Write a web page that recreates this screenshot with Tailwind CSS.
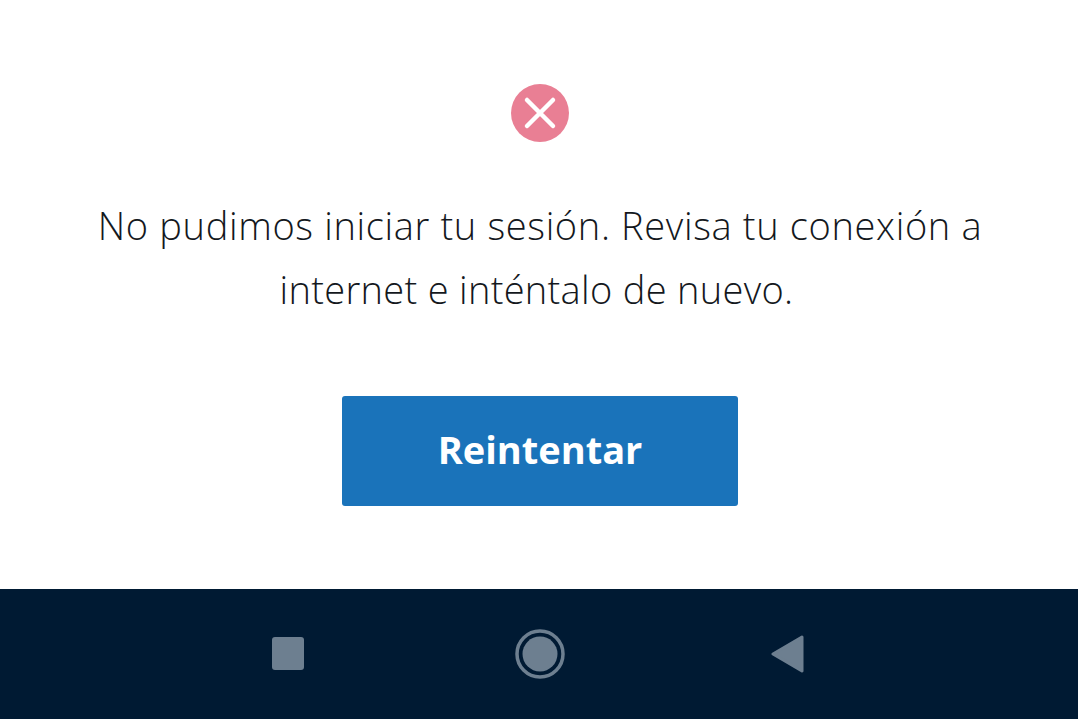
<!DOCTYPE html>
<html lang="en">
  <head>
    <meta charset="UTF-8" />
    <title>Reintentar</title>
    <script src="https://cdn.jsdelivr.net/npm/@tailwindcss/browser@4"></script>
  </head>
  <body class="bg-white font-['Open_Sans','Lato',sans-serif]">
    <div class="flex h-[719px] w-[1078px] flex-col overflow-hidden">
      <main class="flex h-[589px] flex-col items-center pt-[84px] pl-[2px]">
        <svg class="h-[58px] w-[58px]" viewBox="0 0 58 58">
          <circle cx="29" cy="29" r="29" fill="#e97f94" />
          <path d="M16 16 L42 42 M42 16 L16 42" stroke="#fff" stroke-width="4.5" stroke-linecap="round" />
        </svg>
        <p class="mt-[51px] w-[940px] text-center text-[38px] leading-[64px] font-light text-[#14181d]">
          <span class="block tracking-[0.65px]">No pudimos iniciar tu sesión. Revisa tu conexión a</span>
          <span class="block pr-[7px] tracking-[0.31px]">internet e inténtalo de nuevo.</span>
        </p>
        <button class="mt-[75px] flex h-[110px] w-[396px] items-center justify-center rounded-[3px] bg-[#1a73ba] pb-[3px] text-[38px] font-bold text-white">
          Reintentar
        </button>
      </main>
      <nav class="flex h-[130px] items-center justify-between bg-[#001a33] pr-[274px] pb-[1px] pl-[272px]">
        <div class="h-[33px] w-[32px] rounded-[3px] bg-[#6d7f90]"></div>
        <svg class="ml-[4px] h-[50px] w-[50px]" viewBox="0 0 50 50">
          <circle cx="25" cy="25" r="23" fill="none" stroke="#6d7f90" stroke-width="3.5" />
          <circle cx="25" cy="25" r="17.5" fill="#6d7f90" />
        </svg>
        <svg class="h-[38px] w-[33px]" viewBox="0 0 33 38">
          <path d="M31 2 L2 19 L31 36 Z" fill="#6d7f90" stroke="#6d7f90" stroke-width="3" stroke-linejoin="round" />
        </svg>
      </nav>
    </div>
  </body>
</html>
